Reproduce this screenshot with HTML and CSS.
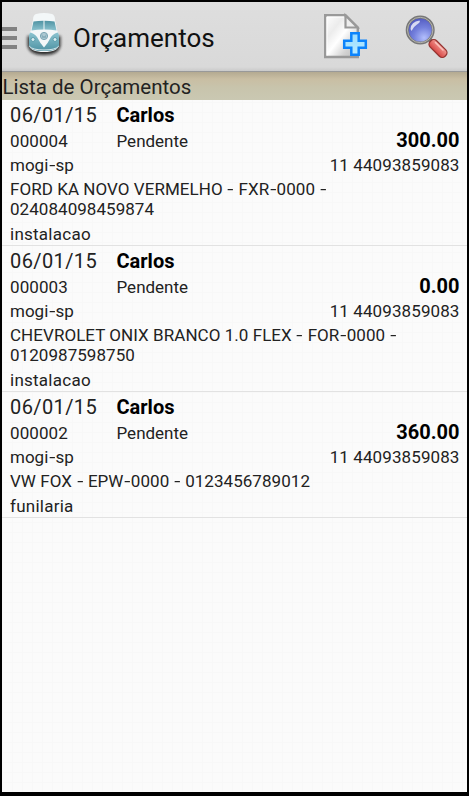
FILE: index.html
```html
<!DOCTYPE html>
<html lang="pt-BR">
<head>
    <meta charset="UTF-8" />
    <title>Orçamentos</title>
    <link rel="stylesheet" href="styles.css">
</head>
<body>

    <div class="screen">
        <header class="topbar">
            <div class="menu">
                <span></span>
                <span></span>
                <span></span>
            </div>
            <svg class="logo" width="40" height="48" viewBox="0 0 40 48">
                <defs>
                    <linearGradient id="busBody" x1="0" y1="0" x2="0" y2="1">
                        <stop offset="0" stop-color="#8cc4d0" />
                        <stop offset="1" stop-color="#4f93a4" />
                    </linearGradient>
                    <linearGradient id="busGlass" x1="0" y1="0" x2="0" y2="1">
                        <stop offset="0" stop-color="#4f93a3" />
                        <stop offset="1" stop-color="#8cc3cf" />
                    </linearGradient>
                    <filter id="soft" x="-30%" y="-30%" width="160%" height="160%">
                        <feGaussianBlur stdDeviation="1.7" />
                    </filter>
                </defs>
                <path filter="url(#soft)" fill="#111" opacity=".85" d="M3.500 24h33v9q-1 10-16.500 10T3.500 33z" />
                <path fill="#f3f7f8" d="M9 8Q9 3 12 2Q20 0 28 2Q31 3 31 8L33 18L35 23V33Q34 40 20 40T5 33V23L7 18z" />
                <path fill="url(#busGlass)" d="M9.500 9.500Q14 8.800 19.500 8.800V17.500Q13 17.500 7.500 18.500zM20.500 8.800Q26 8.800 30.500 9.500L32.500 18.500Q27 17.500 20.500 17.500z" />
                <path fill="url(#busBody)" d="M6 20.500Q10 21 13 25Q16 31 20 35.500Q24 31 27 25Q30 21 34 20.500L35 23V33Q34 39 20 39T5 33V23z" />
                <path fill="none" stroke="#d5e6ea" stroke-width="1" d="M5.500 34.500Q9 38 20 38T34.500 34.500" />
                <circle cx="9" cy="27.500" r="2" fill="#dceef1" stroke="#5c9dac" />
                <circle cx="31" cy="27.500" r="2" fill="#dceef1" stroke="#5c9dac" />
                <circle cx="20" cy="24" r="3.600" fill="#adc9d2" stroke="#7ba5b3" />
                <path fill="none" stroke="#7ba5b3" stroke-width=".8" d="M17.800 22.500L19 26L20 24L21 26L22.200 22.500" />
            </svg>
            <h1 class="title">Orçamentos</h1>
            <svg class="new-doc" width="46" height="48" viewBox="0 0 46 48">
                <defs>
                    <linearGradient id="paper" x1="0" y1="0" x2="1" y2="1">
                        <stop offset="0" stop-color="#fff" />
                        <stop offset=".3" stop-color="#ececec" />
                        <stop offset=".5" stop-color="#fff" />
                        <stop offset=".75" stop-color="#d2d2d2" />
                        <stop offset="1" stop-color="#bbb" />
                    </linearGradient>
                    <linearGradient id="plus" x1="0" y1="0" x2="0" y2="1">
                        <stop offset="0" stop-color="#9bdcff" />
                        <stop offset="1" stop-color="#b9ebff" />
                    </linearGradient>
                </defs>
                <path fill="url(#paper)" stroke="#999" stroke-width="2.400" d="M2.200 3.200H22.500L34.800 15.500V45H2.200z" />
                <path fill="none" stroke="#fff" d="M4 43.500V5H21" />
                <path fill="#eee" stroke="#999" stroke-width="2.200" d="M22.500 3.500V15.500H34.500z" />
                <path fill="url(#plus)" stroke="#0c83fb" stroke-width="2.500" d="M28.300 21.200H35.700V28.800H42.800V35.700H35.700V42.800H28.300V35.700H21.200V28.800H28.300z" />
            </svg>
            <svg class="search" width="46" height="48" viewBox="0 0 46 48">
                <defs>
                    <radialGradient id="lens" cx=".65" cy=".8" r=".8">
                        <stop offset="0" stop-color="#b3bffc" />
                        <stop offset=".5" stop-color="#7480dc" />
                        <stop offset="1" stop-color="#5058be" />
                    </radialGradient>
                    <linearGradient id="grip" x1="0" y1="0" x2="0" y2="1">
                        <stop offset="0" stop-color="#f49a94" />
                        <stop offset="1" stop-color="#d54543" />
                    </linearGradient>
                </defs>
                <path stroke="#777" stroke-width="4" d="M24 26L28 30" />
                <circle cx="15.200" cy="17" r="13" fill="url(#lens)" stroke="#777" stroke-width="3" />
                <circle cx="15.200" cy="17" r="12.700" fill="none" stroke="#b5b5ad" stroke-width="1" />
                <path fill="#fff" opacity=".75" d="M5.500 16Q6 8.500 14.500 7.500Q16 9 12 11.500T6.500 18z" />
                <rect x="-10.500" y="-4.500" width="21" height="9" rx="4" transform="translate(33 35.500) rotate(45)" fill="url(#grip)" stroke="#943431" stroke-width="1.300" />
                <path fill="none" stroke="#fac0bb" stroke-width="1.600" stroke-linecap="round" d="M30.500 29.500L38 37" />
            </svg>
        </header>

        <h2 class="subtitle">Lista de Orçamentos</h2>

        <ul class="list">
            <li class="item">
                <div class="row head"><span class="date">06/01/15</span><b class="name">Carlos</b></div>
                <div class="row"><span class="code">000004</span><span class="status">Pendente</span><b class="price">300.00</b></div>
                <div class="row"><span class="city">mogi<span class="dash">-</span>sp</span><span class="phone">11 44093859083</span></div>
                <div class="row car">FORD KA NOVO VERMELHO <span class="dash">-</span> FXR<span class="dash">-</span>0000 <span class="dash">-</span><br>024084098459874</div>
                <div class="row job">instalacao</div>
            </li>
            <li class="item">
                <div class="row head"><span class="date">06/01/15</span><b class="name">Carlos</b></div>
                <div class="row"><span class="code">000003</span><span class="status">Pendente</span><b class="price">0.00</b></div>
                <div class="row"><span class="city">mogi<span class="dash">-</span>sp</span><span class="phone">11 44093859083</span></div>
                <div class="row car">CHEVROLET ONIX BRANCO 1.0 FLEX <span class="dash">-</span> FOR<span class="dash">-</span>0000 <span class="dash">-</span><br>0120987598750</div>
                <div class="row job">instalacao</div>
            </li>
            <li class="item">
                <div class="row head"><span class="date">06/01/15</span><b class="name">Carlos</b></div>
                <div class="row"><span class="code">000002</span><span class="status">Pendente</span><b class="price">360.00</b></div>
                <div class="row"><span class="city">mogi<span class="dash">-</span>sp</span><span class="phone">11 44093859083</span></div>
                <div class="row car">VW FOX <span class="dash">-</span> EPW<span class="dash">-</span>0000 <span class="dash">-</span> 0123456789012</div>
                <div class="row job">funilaria</div>
            </li>
        </ul>
    </div>

</body>
</html>
```
FILE: styles.css
```css
* {
    box-sizing: border-box;
}

body {
    margin: 0;
    background-color: #fff;
    font-family: Roboto, sans-serif;
    color: #222;
}

h1, h2, ul {
    margin: 0;
    padding: 0;
    font-weight: normal;
    list-style: none;
}

.screen {
    width: 469px;
    height: 796px;
    border: 2px solid #000;
    border-bottom-width: 4px;
    background-color: #fbfbfb;
    /* faint grid of the window background */
    background-image: linear-gradient(#f8f8f8 1px, transparent 1px),
        linear-gradient(90deg, #f8f8f8 1px, transparent 1px);
    background-size: 10px 10px;
    overflow: hidden;
}

.topbar {
    display: flex;
    align-items: flex-start;
    height: 70px;
    background: linear-gradient(#dedede, #d9d9d9 94%, #cacaca);
    border-bottom: 1px solid #999;
}

.menu {
    display: flex;
    flex-direction: column;
    gap: 5px;
    width: 15px;
    margin-top: 25px;
}

.menu span {
    height: 4px;
    background-color: #828282;
}

.logo {
    margin: 10px 0 0 7px;
}

.title {
    margin: 19px 0 0 9px;
    width: 250px;
    font-size: 26px;
    line-height: 34px;
    color: #111;
}

.new-doc {
    margin-top: 10px;
}

.search {
    margin: 11px 0 0 36px;
}

.subtitle {
    height: 28px;
    padding-left: 0.5px;
    background: linear-gradient(#b4aa91, #c9bea3 25%, #c8c4ac 55%, #cac8b2);
    font-size: 20.5px;
    line-height: 30px;
}

.item {
    padding: 1px 7.5px 0 8px;
    border-bottom: 1px solid #e2e2e2;
}

.row {
    display: flex;
    height: 24px;
    align-items: center;
    font-size: 17px;
    line-height: 20px;
}

.row.head {
    height: 28px;
    font-size: 20px;
}

.date, .code {
    width: 106.5px;
}

.date {
    letter-spacing: 0.4px;
}

.code, .phone {
    letter-spacing: 0.1px;
}

.name, .price {
    color: #000;
}

.price, .phone {
    margin-left: auto;
}

.price {
    margin-top: -3px;
    font-size: 20px;
}

.row.car {
    display: block;
    height: auto;
    padding: 2px 0;
    letter-spacing: 0.05px;
}

/* wide hyphen */
.dash {
    display: inline-block;
    margin: 0 1.3px;
    transform: scaleX(1.3);
}

.row.job {
    padding-top: 2px;
    letter-spacing: 0.25px;
}
```
